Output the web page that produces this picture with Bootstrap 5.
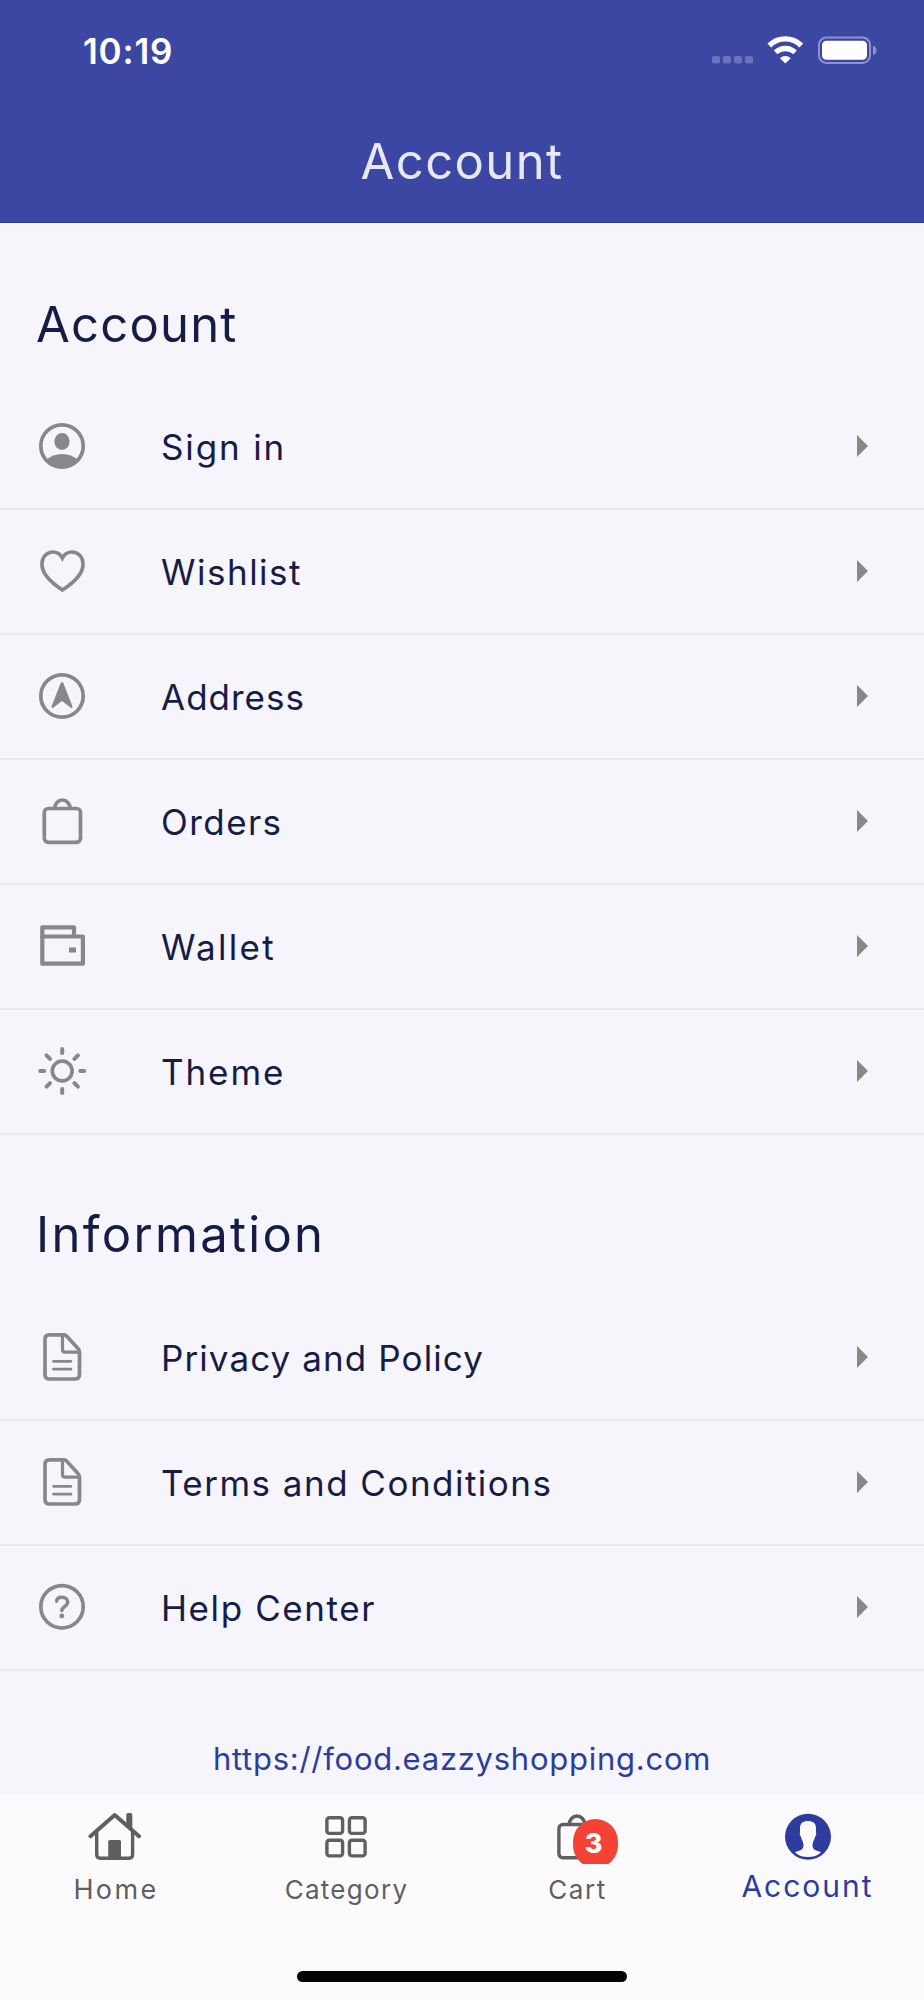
<!DOCTYPE html>
<html lang="en">
<head>
<meta charset="utf-8">
<meta name="viewport" content="width=device-width, initial-scale=1">
<title>Account</title>
<link href="https://cdn.jsdelivr.net/npm/bootstrap@5.3.0/dist/css/bootstrap.min.css" rel="stylesheet">
<style>
  body { font-family: Inter, "Liberation Sans", sans-serif; background: #f5f5fb; color: #171c46; }
  .screen { width: 924px; height: 2000px; }
  .app-top { height: 223px; background: #3b47a2; color: #fff; border-bottom: 1px solid #2b3aa0; }
  .status-row { height: 102px; padding: 0 46px 0 83px; }
  .clock { font-size: 35px; font-weight: 600; letter-spacing: .8px; line-height: 1; }
  .page-title { font-size: 49px; line-height: 120px; letter-spacing: 1.4px; color: #e7e8f4; }
  .section-title { font-size: 49px; line-height: 60px; font-weight: 400; padding: 72px 36px 0; margin: 0; height: 162px; letter-spacing: 1.2px; }
  .section-title.info { padding-top: 70px; height: 161px; letter-spacing: 2.3px; }
  .list-group-flush > .menu-row, .list-group-flush > .menu-row:last-child { height: 125px; padding: 0 56px 2px 38px; border: 0; border-bottom: 2px solid #e9e9ef; background: transparent; color: inherit; }
  .menu-icon { width: 48px; height: 48px; overflow: visible; fill: none; stroke: #888; stroke-width: 3.7; flex: none; }
  .menu-icon .solid { fill: #888; stroke: none; }
  .menu-text { font-size: 35px; line-height: 50px; margin-left: 75px; padding-top: 2px; }
  .chev { width: 11px; height: 22px; fill: #888; }
  .site-link { height: 123px; font-size: 31px; letter-spacing: .74px; color: #2c3c9f; padding-top: 53px; }
  .tabs { height: 205px; background: #fbfbfe; padding-top: 15px; }
  .tab { width: 231px; color: #5f5f5f; text-decoration: none; padding-right: 2px; }
  .tab svg { width: 54px; height: 54px; fill: none; stroke: #5f5f5f; stroke-width: 3.4; }
  .tab .solid { fill: #5f5f5f; stroke: none; }
  .tab-text { font-size: 26px; line-height: 40px; margin-top: 6px; }
  .tab.current { color: #2c3c9f; }
  .tab.current .tab-text { font-size: 30px; margin-top: 2px; letter-spacing: 2px; }
  .tab-icon { width: 90px; height: 54px; overflow: hidden; }
  .count { left: 41px; top: 9px; width: 45px; height: 48.5px; border-radius: 22.5px; background: #f44236; color: #fff; font-size: 27px; font-weight: 800; line-height: 49px; padding-right: 3px; }
  .home-bar { width: 330px; height: 11px; border-radius: 6px; background: #000; margin-top: 61px; }
</style>
</head>
<body>
<div class="screen d-flex flex-column overflow-hidden">
  <header class="app-top">
    <div class="status-row d-flex align-items-center justify-content-between">
      <span class="clock">10:19</span>
      <svg width="168" height="30" viewBox="0 0 168 30">
        <g fill="#6a73bc"><rect x="2" y="20" width="8" height="7.500" rx="2"/><rect x="13" y="20" width="8" height="7.500" rx="2"/><rect x="24" y="20" width="8" height="7.500" rx="2"/><rect x="35" y="20" width="8" height="7.500" rx="2"/></g>
        <g fill="none" stroke="#fff" stroke-width="5.400"><path d="M59.300 9.500a22.700 22.700 0 0 1 32 0"/><path d="M65.700 16.400a13.800 13.800 0 0 1 19.300 0"/></g>
        <path d="M70 22.300a7.600 7.600 0 0 1 10.700 0l-5.300 5.300z" fill="#fff"/>
        <rect x="109" y="1.500" width="51" height="25.500" rx="7.500" fill="none" stroke="#8d94ca" stroke-width="2"/>
        <rect x="112" y="4.800" width="45" height="19" rx="4.500" fill="#fff"/>
        <path d="M163 9.800q3.500 1.300 3.500 4.600t-3.500 4.600z" fill="#8d94ca"/>
      </svg>
    </div>
    <div class="page-title text-center">Account</div>
  </header>

  <main>
    <h1 class="section-title">Account</h1>
    <div class="list-group list-group-flush">
      <a href="#" class="list-group-item menu-row d-flex align-items-center">
        <svg class="menu-icon" viewBox="0 0 48 48"><circle cx="24" cy="24" r="21.200"/><ellipse class="solid" cx="24" cy="19.500" rx="7.600" ry="8.500"/><path class="solid" d="M8 38q6.500-6 16-6t16 6q-6 8-16 8t-16-8z"/></svg>
        <span class="menu-text" style="letter-spacing:1.85px">Sign in</span>
        <svg class="chev ms-auto" viewBox="0 0 11 22"><path d="M0 0l11 11-11 11z"/></svg>
      </a>
      <a href="#" class="list-group-item menu-row d-flex align-items-center">
        <svg class="menu-icon" viewBox="0 0 48 48"><path d="M24.400 43C13 35.500 4 27 4 17.500C4 9.500 9 5 15 5C19 5 22.500 7.300 24.400 11C26.300 7.300 29.800 5 34 5C40 5 45 9.500 45 17.500C45 27 36 35.500 24.400 43z"/></svg>
        <span class="menu-text" style="letter-spacing:1.5px">Wishlist</span>
        <svg class="chev ms-auto" viewBox="0 0 11 22"><path d="M0 0l11 11-11 11z"/></svg>
      </a>
      <a href="#" class="list-group-item menu-row d-flex align-items-center">
        <svg class="menu-icon" viewBox="0 0 48 48"><circle cx="24" cy="24" r="21.200"/><path class="solid" d="M24 10q1 0 1.500 1.500l9 23q.2 2-1.700 1.200L24 29l-8.800 6.700q-1.900.8-1.700-1.200l9-23Q23 10 24 10z"/></svg>
        <span class="menu-text" style="letter-spacing:1px">Address</span>
        <svg class="chev ms-auto" viewBox="0 0 11 22"><path d="M0 0l11 11-11 11z"/></svg>
      </a>
      <a href="#" class="list-group-item menu-row d-flex align-items-center">
        <svg class="menu-icon" viewBox="0 0 48 48"><rect x="6.300" y="11.500" width="36.200" height="33.800" rx="4"/><path d="M16.700 11.500a7.700 8.500 0 0 1 15.400 0"/></svg>
        <span class="menu-text" style="letter-spacing:1.45px">Orders</span>
        <svg class="chev ms-auto" viewBox="0 0 11 22"><path d="M0 0l11 11-11 11z"/></svg>
      </a>
      <a href="#" class="list-group-item menu-row d-flex align-items-center">
        <svg class="menu-icon" viewBox="0 0 48 48" stroke-linejoin="round"><g stroke-width="4.200"><path d="M36 14V5.300H4.300V16"/><rect x="4.300" y="14.500" width="40.600" height="27.200"/></g><path class="solid" d="M31 25.500h7v5h-7z"/></svg>
        <span class="menu-text" style="letter-spacing:2.3px">Wallet</span>
        <svg class="chev ms-auto" viewBox="0 0 11 22"><path d="M0 0l11 11-11 11z"/></svg>
      </a>
      <a href="#" class="list-group-item menu-row d-flex align-items-center">
        <svg class="menu-icon" viewBox="0 0 48 48"><circle cx="24.200" cy="24" r="9.900"/><path stroke-width="4" stroke-linecap="round" d="M24.200 2v4M24.200 42v4M2.200 24h4M42.200 24h4M8.500 8.300l3.500 3.500M36.400 36.200l3.500 3.500M8.500 39.700l3.500-3.500M36.400 11.800l3.500-3.500"/></svg>
        <span class="menu-text" style="letter-spacing:1.9px">Theme</span>
        <svg class="chev ms-auto" viewBox="0 0 11 22"><path d="M0 0l11 11-11 11z"/></svg>
      </a>
    </div>

    <h2 class="section-title info">Information</h2>
    <div class="list-group list-group-flush">
      <a href="#" class="list-group-item menu-row d-flex align-items-center">
        <svg class="menu-icon" viewBox="0 0 48 48" stroke-linejoin="round"><path d="M26.500 1.800H11.500q-4.500 0-4.500 4.500V41.500q0 4.500 4.500 4.500h25.500q4.500 0 4.500-4.500V19q0-2-1.500-3.500L29 3.500q-1-1.700-2.500-1.700z"/><path d="M24.500 2v14.500q0 2.700 2.700 2.700H41" stroke-width="3.200"/><path stroke-width="2.700" stroke-linecap="round" d="M15.500 28.300h17.500M15.500 36.200h17.500"/></svg>
        <span class="menu-text" style="letter-spacing:1.1px">Privacy and Policy</span>
        <svg class="chev ms-auto" viewBox="0 0 11 22"><path d="M0 0l11 11-11 11z"/></svg>
      </a>
      <a href="#" class="list-group-item menu-row d-flex align-items-center">
        <svg class="menu-icon" viewBox="0 0 48 48" stroke-linejoin="round"><path d="M26.500 1.800H11.500q-4.500 0-4.500 4.500V41.500q0 4.500 4.500 4.500h25.500q4.500 0 4.500-4.500V19q0-2-1.500-3.500L29 3.500q-1-1.700-2.500-1.700z"/><path d="M24.500 2v14.500q0 2.700 2.700 2.700H41" stroke-width="3.200"/><path stroke-width="2.700" stroke-linecap="round" d="M15.500 28.300h17.500M15.500 36.200h17.500"/></svg>
        <span class="menu-text" style="letter-spacing:1.48px">Terms and Conditions</span>
        <svg class="chev ms-auto" viewBox="0 0 11 22"><path d="M0 0l11 11-11 11z"/></svg>
      </a>
      <a href="#" class="list-group-item menu-row d-flex align-items-center">
        <svg class="menu-icon" viewBox="0 0 48 48"><circle cx="24" cy="23.800" r="21.200"/><path stroke-linecap="round" stroke-width="3.500" d="M18.700 18.300c0-2.600 2.300-4 5.300-4s5.700 1.700 5.700 4.700c0 4.300-5.900 4.600-5.900 8.500"/><circle class="solid" cx="23.800" cy="33" r="2.400"/></svg>
        <span class="menu-text" style="letter-spacing:1.6px">Help Center</span>
        <svg class="chev ms-auto" viewBox="0 0 11 22"><path d="M0 0l11 11-11 11z"/></svg>
      </a>
    </div>
    <div class="site-link d-flex align-items-center justify-content-center">https://food.eazzyshopping.com</div>
  </main>

  <nav class="tabs d-flex flex-column align-items-center mt-auto">
    <div class="d-flex">
      <a href="#" class="tab d-flex flex-column align-items-center">
        <svg viewBox="0 0 54 54"><path stroke-width="4" stroke-linecap="round" stroke-linejoin="round" d="M2.500 26.300L26.700 5 51 26.300"/><path d="M8.700 21.500V44.500q0 3.700 3.700 3.700h28.500q3.700 0 3.700-3.700V21.500"/><path class="solid" d="M38.300 4.800q0-1.800 1.800-1.800h2.400q1.800 0 1.800 1.800V20l-6-5zM20.200 48V31.500q0-1.500 1.500-1.500h9.800q1.500 0 1.500 1.500V48z"/></svg>
        <span class="tab-text" style="font-size:27px;letter-spacing:2.4px;text-indent:3px">Home</span>
      </a>
      <a href="#" class="tab d-flex flex-column align-items-center">
        <svg viewBox="0 0 54 54"><rect x="7.900" y="7.700" width="15.700" height="15.700" rx="2.500"/><rect x="30.400" y="7.700" width="15.700" height="15.700" rx="2.500"/><rect x="7.900" y="30.200" width="15.700" height="15.700" rx="2.500"/><rect x="30.400" y="30.200" width="15.700" height="15.700" rx="2.500"/></svg>
        <span class="tab-text" style="letter-spacing:1.3px;text-indent:2px">Category</span>
      </a>
      <a href="#" class="tab d-flex flex-column align-items-center">
        <div class="tab-icon position-relative text-center">
          <svg class="d-block mx-auto" viewBox="0 0 54 54"><rect x="8.900" y="14.500" width="36.200" height="33.300" rx="4"/><path d="M19.300 14.500a7.700 8.500 0 0 1 15.400 0"/></svg>
          <span class="count position-absolute">3</span>
        </div>
        <span class="tab-text" style="letter-spacing:1.6px;text-indent:2px">Cart</span>
      </a>
      <a href="#" class="tab current d-flex flex-column align-items-center">
        <svg viewBox="0 0 54 54"><circle cx="27" cy="26.700" r="23" fill="#2c3c9f" stroke="none"/><path d="M27 11c-5 0-8 2.500-8 7v4.500q-.8 1.500.2 3l.8 1.500c.5 2.500 1.800 4 2.300 6.500.5 3 .2 5-2.300 6.500-2.500 1.200-5 1-6 2.500q5 4.500 13 4.500t13-4.500c-1-1.500-3.500-1.300-6-2.500-2.500-1.500-2.800-3.500-2.300-6.500.5-2.500 1.800-4 2.300-6.500l.8-1.500q1-1.500.2-3V18c0-4.500-3-7-8-7z" fill="#fbfbfe" stroke="none"/></svg>
        <span class="tab-text">Account</span>
      </a>
    </div>
    <div class="home-bar"></div>
  </nav>
</div>
<script src="https://cdn.jsdelivr.net/npm/bootstrap@5.3.0/dist/js/bootstrap.bundle.min.js"></script>
</body>
</html>
